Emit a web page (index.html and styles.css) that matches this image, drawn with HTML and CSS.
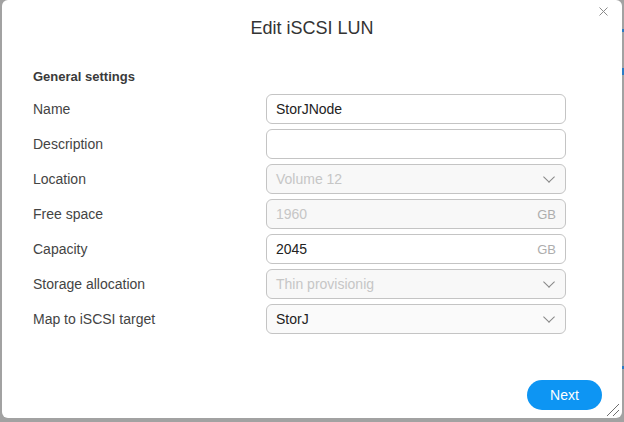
FILE: index.html
```html
<!DOCTYPE html>
<html lang="en">
<head>
  <meta charset="UTF-8" />
  <title>Edit iSCSI LUN</title>
  <link rel="stylesheet" href="styles.css">
</head>
<body>
  <!-- Edit LUN dialog -->
  <div class="dialog">
    <button class="close" title="Close">
      <svg width="9" height="9" viewBox="0 0 9 9">
        <path d="M0.5 0.5 L8.5 8.5 M8.5 0.5 L0.5 8.5" stroke="#8a8a8a" stroke-width="1" fill="none"/>
      </svg>
    </button>

    <div class="title">Edit iSCSI LUN</div>

    <div class="section-title">General settings</div>

    <form class="form">
      <label>Name</label>
      <div class="field"><span class="value">StorJNode</span></div>

      <label>Description</label>
      <div class="field"></div>

      <label>Location</label>
      <div class="field disabled select">
        <span class="value">Volume 12</span>
        <span class="chevron"></span>
      </div>

      <label>Free space</label>
      <div class="field disabled">
        <span class="value">1960</span>
        <span class="unit">GB</span>
      </div>

      <label>Capacity</label>
      <div class="field">
        <span class="value">2045</span>
        <span class="unit">GB</span>
      </div>

      <label>Storage allocation</label>
      <div class="field disabled select">
        <span class="value">Thin provisionig</span>
        <span class="chevron"></span>
      </div>

      <label>Map to iSCSI target</label>
      <div class="field select">
        <span class="value">StorJ</span>
        <span class="chevron"></span>
      </div>
    </form>

    <div class="actions">
      <button class="btn-primary">Next</button>
    </div>

    <!-- resize grip -->
    <svg class="grip" width="14" height="14" viewBox="0 0 14 14">
      <path d="M1 13 L13 1 M7 13 L13 7" stroke="#6e6e6e" stroke-width="1" fill="none"/>
    </svg>
  </div>
</body>
</html>
```
FILE: styles.css
```css
:root {
  --backdrop: #a2a2a2;
  --panel: #ffffff;
  --text: #333333;
  --muted: #c6c6c6;
  --border: #c4c4c4;
  --accent: #0d95f3;
  --font-family: "Liberation Sans", Arial, sans-serif;
}

html, body {
  height: 100%;
}

body {
  margin: 0;
  font-family: var(--font-family);
  color: var(--text);
  /* bits of the page behind the overlay */
  background:
    linear-gradient(#2b7bc4, #2b7bc4) right 0 top 29px / 2px 3px no-repeat,
    linear-gradient(#2b7bc4, #2b7bc4) right 0 top 68px / 2px 7px no-repeat,
    linear-gradient(#2b7bc4, #2b7bc4) right 0 top 366px / 2px 3px no-repeat,
    var(--backdrop);
  overflow: hidden;
}

/* Dialog */
.dialog {
  position: relative;
  box-sizing: border-box;
  width: 620px;
  height: 418px;
  margin-left: 2px;
  background-color: var(--panel);
  border-radius: 6px;
  padding: 18px 0 0 31px;
  display: flex;
  flex-direction: column;
}

.close {
  position: absolute;
  top: 7px;
  right: 14px;
  border: none;
  background: none;
  padding: 0;
  line-height: 0;
  cursor: pointer;
}

.title {
  font-size: 18px;
  line-height: 20px;
  text-align: center;
  margin-left: -31px;
  color: #333;
}

.section-title {
  margin-top: 31px;
  font-size: 13px;
  line-height: 16px;
  font-weight: bold;
  color: #3a3a3a;
}

/* Form rows */
.form {
  margin: 9px 0 0;
  display: grid;
  grid-template-columns: 233px 300px;
  grid-auto-rows: 30px;
  row-gap: 5px;
  align-items: center;
}

.form label {
  font-size: 14px;
  color: #444;
}

.field {
  box-sizing: border-box;
  height: 30px;
  border: 1px solid var(--border);
  border-radius: 6px;
  background-color: #fff;
  display: flex;
  align-items: center;
  padding: 0 9px;
  font-size: 14px;
  color: #222;
}
.field .value {
  flex: 1;
}
.field .unit {
  font-size: 13px;
  color: #adadad;
}
.field.select {
  background-color: #fafafa;
}
.field.disabled {
  background-color: #f8f8f8;
  color: var(--muted);
}

.chevron {
  width: 7px;
  height: 7px;
  margin: -4px 3px 0 0;
  border-right: 1px solid #888;
  border-bottom: 1px solid #888;
  transform: scaleX(1.05) rotate(45deg);
}

/* Footer */
.actions {
  margin-top: auto;
  display: flex;
  justify-content: flex-end;
  padding: 0 20px 8px 0;
}
.btn-primary {
  width: 75px;
  height: 30px;
  border: none;
  border-radius: 15px;
  background-color: var(--accent);
  color: #fff;
  font-family: var(--font-family);
  font-size: 14px;
  cursor: pointer;
}
.btn-primary:hover {
  background-color: #0a82d6;
}

.grip {
  position: absolute;
  right: 2px;
  bottom: 1px;
}
```
